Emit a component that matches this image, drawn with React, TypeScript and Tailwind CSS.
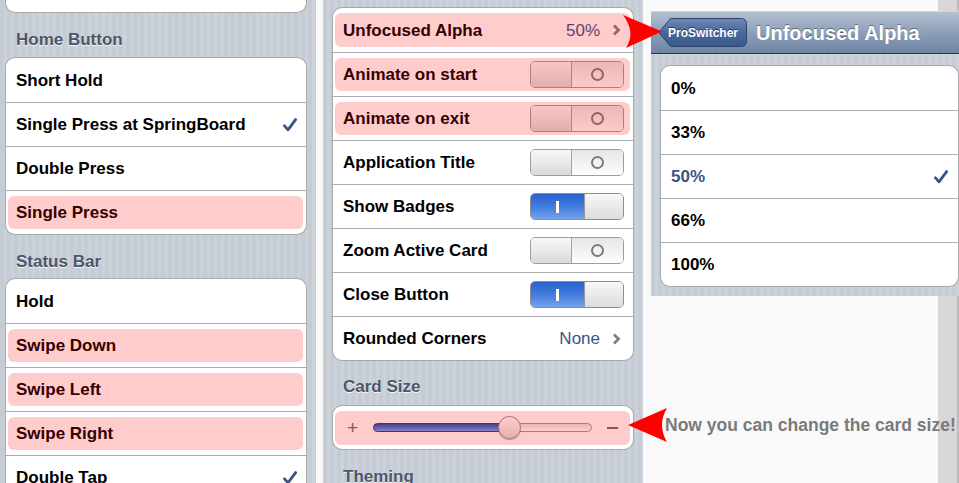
import React from 'react';

const stripes =
  'bg-[image:repeating-linear-gradient(90deg,#c5ccd4_0px,#c5ccd4_4px,#cbd2d9_4px,#cbd2d9_7px)]';

function Check() {
  return (
    <svg width="14" height="14" viewBox="0 0 14 14" className="shrink-0">
      <path
        d="M1.5 7.8 L5 11.8 L12.6 1.6"
        fill="none"
        stroke="#385487"
        strokeWidth="2.8"
        strokeLinecap="round"
        strokeLinejoin="round"
      />
    </svg>
  );
}

function Chevron() {
  return (
    <svg width="9" height="12" viewBox="0 0 9 12" className="shrink-0">
      <path d="M2 1.5 L6.5 6 L2 10.5" fill="none" stroke="#7f7f7f" strokeWidth="2.8" />
    </svg>
  );
}

function Switch({ on }: { on: boolean }) {
  if (on) {
    return (
      <div className="flex h-[27px] w-[94px] shrink-0 overflow-hidden rounded-[5px] border border-[#8e8e8e]">
        <div className="flex w-[53px] items-center justify-center bg-[linear-gradient(#2a63cf,#3d78dc_45%,#74a3ee)]">
          <div className="h-[12px] w-[2.5px] bg-white" />
        </div>
        <div className="flex-1 border-l border-[#9a9a9a] bg-[linear-gradient(#f7f7f7,#dcdcdc)]" />
      </div>
    );
  }
  return (
    <div className="flex h-[27px] w-[94px] shrink-0 overflow-hidden rounded-[5px] border border-[#9e9e9e]">
      <div className="w-[41px] border-r border-[#a2a2a2] bg-[linear-gradient(#f8f8f8,#dadada)]" />
      <div className="flex flex-1 items-center justify-center bg-[linear-gradient(#e6e6e6,#fdfdfd)]">
        <div className="h-[13px] w-[13px] rounded-full border-2 border-[#7c7c7c]" />
      </div>
    </div>
  );
}

function Row({
  label,
  first,
  hl,
  blue,
  children,
}: {
  label?: string;
  first?: boolean;
  hl?: boolean;
  blue?: boolean;
  children?: React.ReactNode;
}) {
  return (
    <div
      className={`relative flex h-[44px] items-center pl-[10px] pr-[9px] ${
        first ? '' : 'border-t border-[#acadb0]'
      }`}
    >
      <span
        className={`flex-1 whitespace-nowrap text-[17px] font-bold leading-[21px] ${
          blue ? 'text-[#385487]' : 'text-black'
        }`}
      >
        {label}
      </span>
      {children}
      {hl && (
        <div className="pointer-events-none absolute bottom-[5px] left-[2px] right-[3px] top-[5px] rounded-[6px] bg-[rgba(255,0,0,0.2)]" />
      )}
    </div>
  );
}

function Card({ children, className = '' }: { children: React.ReactNode; className?: string }) {
  return (
    <div className={`overflow-hidden rounded-[9px] bg-white ring-1 ring-[#a8a9ad] ${className}`}>
      {children}
    </div>
  );
}

function Header({ children, className = 'h-[46px] pt-[17px]' }: { children: React.ReactNode; className?: string }) {
  return (
    <div
      className={`${className} pl-[10px] text-[17px] font-bold leading-[21px] text-[#4c566c] [text-shadow:0_1px_0_rgba(255,255,255,0.85)]`}
    >
      {children}
    </div>
  );
}

function Value({ children }: { children: React.ReactNode }) {
  return (
    <div className="flex items-center gap-[12px] pr-[3px]">
      <span className="text-[17px] leading-[21px] text-[#385487]">{children}</span>
      <Chevron />
    </div>
  );
}

export default function App() {
  return (
    <div className="relative flex h-[483px] w-[959px] overflow-hidden bg-[#f9f9f9] font-['Liberation_Sans',Arial,sans-serif]">
      {/* Left panel */}
      <div className={`h-full w-[316px] shrink-0 overflow-hidden pl-[6px] pr-[10px] ${stripes}`}>
        <div className="-mt-[32px]">
          <Card>
            <Row first />
          </Card>
          <Header>Home Button</Header>
          <Card>
            <Row first label="Short Hold" />
            <Row label="Single Press at SpringBoard">
              <Check />
            </Row>
            <Row label="Double Press" />
            <Row label="Single Press" hl />
          </Card>
          <Header className="h-[45px] pt-[17px]">Status Bar</Header>
          <Card>
            <Row first label="Hold" />
            <Row label="Swipe Down" hl />
            <Row label="Swipe Left" hl />
            <Row label="Swipe Right" hl />
            <Row label="Double Tap">
              <Check />
            </Row>
          </Card>
        </div>
      </div>

      <div className="w-[7px] shrink-0" />

      {/* Middle panel */}
      <div className={`h-full w-[320px] shrink-0 overflow-hidden px-[10px] pt-[8px] ${stripes}`}>
        <Card>
          <Row first label="Unfocused Alpha" hl>
            <Value>50%</Value>
          </Row>
          <Row label="Animate on start" hl>
            <Switch on={false} />
          </Row>
          <Row label="Animate on exit" hl>
            <Switch on={false} />
          </Row>
          <Row label="Application Title">
            <Switch on={false} />
          </Row>
          <Row label="Show Badges">
            <Switch on />
          </Row>
          <Row label="Zoom Active Card">
            <Switch on={false} />
          </Row>
          <Row label="Close Button">
            <Switch on />
          </Row>
          <Row label="Rounded Corners">
            <Value>None</Value>
          </Row>
        </Card>
        <Header className="h-[46px] pt-[16px]">Card Size</Header>
        <Card>
          <div className="relative flex h-[43px] items-center pl-[14px] pr-[15px]">
            <span className="w-[11px] text-center text-[19px] leading-[20px] text-[#6c6c6c]">+</span>
            <div className="relative ml-[15px] mr-[15px] h-[9px] flex-1 rounded-full border border-[#9a9a9a] bg-[linear-gradient(#e4e4e4,#ffffff)]">
              <div className="absolute bottom-[-1px] left-[-1px] top-[-1px] w-[136px] rounded-full border border-[#1c3f8a] bg-[linear-gradient(#1d4fb8,#3e7be0_55%,#6aa6f8)]" />
              <div className="absolute left-[124px] top-[-8px] h-[23px] w-[23px] rounded-full border border-[#8e8e8e] bg-[linear-gradient(#ffffff,#dedede)] shadow-[0_1px_1px_rgba(0,0,0,0.3)]" />
            </div>
            <div className="h-[2px] w-[11px] bg-[#6c6c6c]" />
            <div className="pointer-events-none absolute bottom-[4px] left-[2px] right-[3px] top-[5px] rounded-[6px] bg-[rgba(255,0,0,0.2)]" />
          </div>
        </Card>
        <Header>Theming</Header>
      </div>

      {/* Right area */}
      <div className="relative flex h-full flex-1 justify-end">
        <div className="h-full w-[21px] border-r-2 border-[#bdbbbc] bg-[#d8d6d7]" />

        {/* Navigation panel */}
        <div className="absolute left-[8px] top-[11px] flex h-[285px] w-[317px] flex-col">
          <div className="flex h-[43px] shrink-0 items-center border-b border-t border-b-[#2d3642] border-t-[#cdd5df] bg-[linear-gradient(#b4c0d1,#8d9fb8_50%,#6d84a2)] pl-[7px]">
            <div className="relative flex h-[29px] w-[89px] shrink-0 items-center justify-end pr-[9px]">
              <svg width="89" height="29" viewBox="0 0 89 29" className="absolute left-0 top-0">
                <defs>
                  <linearGradient id="bb" x1="0" y1="0" x2="0" y2="1">
                    <stop offset="0" stopColor="#6f89b4" />
                    <stop offset="0.5" stopColor="#48679b" />
                    <stop offset="1" stopColor="#3a5a8c" />
                  </linearGradient>
                </defs>
                <path
                  d="M12.5 0.5 H83.5 A5 5 0 0 1 88.5 5.5 V23.5 A5 5 0 0 1 83.5 28.5 H12.5 L0.8 14.5 Z"
                  fill="url(#bb)"
                  stroke="#2f4468"
                  strokeWidth="1"
                />
              </svg>
              <span className="relative text-[12px] font-bold leading-[14px] text-white [text-shadow:0_-1px_0_rgba(0,0,0,0.45)]">
                ProSwitcher
              </span>
            </div>
            <span className="ml-[9px] whitespace-nowrap text-[20px] font-bold leading-[24px] text-white [text-shadow:0_-1px_0_rgba(0,0,0,0.4)]">
              Unfocused Alpha
            </span>
          </div>
          <div className={`flex-1 px-[10px] pt-[12px] ${stripes}`}>
            <Card>
              <Row first label="0%" />
              <Row label="33%" />
              <Row label="50%" blue>
                <div className="pr-[1px]">
                  <Check />
                </div>
              </Row>
              <Row label="66%" />
              <Row label="100%" />
            </Card>
          </div>
        </div>
      </div>

      {/* Annotations */}
      <svg
        width="959"
        height="483"
        viewBox="0 0 959 483"
        className="pointer-events-none absolute left-0 top-0"
      >
        <path d="M623 15 L662 31.5 L626 48 Q636 32 623 15 Z" fill="#ff0000" />
        <path d="M628 425 L667 408 Q657 425 667 442 Z" fill="#ff0000" />
      </svg>
      <div className="pointer-events-none absolute left-[665px] top-[414px] whitespace-nowrap text-[17.5px] font-bold leading-[22px] text-[#7a7a7a]">
        Now you can change the card size!
      </div>
    </div>
  );
}
